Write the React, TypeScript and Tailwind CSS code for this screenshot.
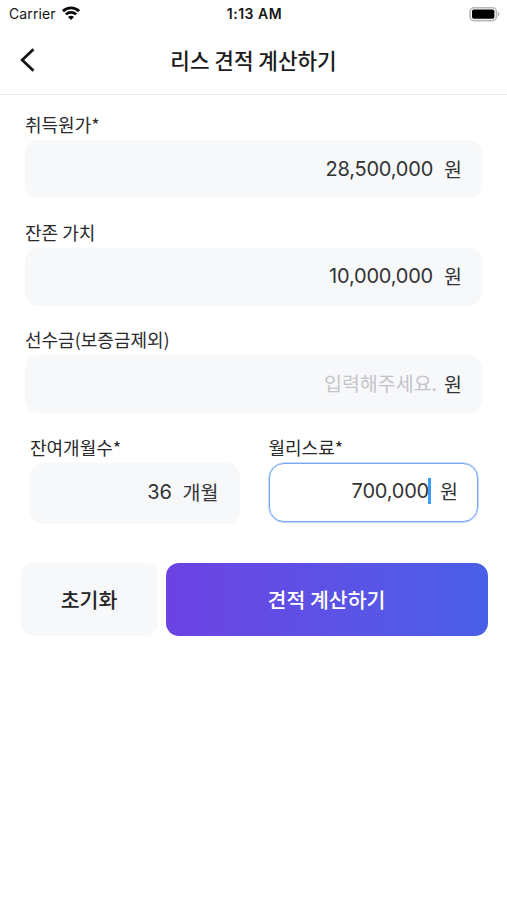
import type { ReactNode } from "react";

const KR = "font-['Noto_Sans_CJK_KR',sans-serif]";
const LATIN = "font-['Inter','Noto_Sans_CJK_KR',sans-serif]";

function StatusBar() {
  return (
    <div className={`${LATIN} grid h-7 grid-cols-3 items-center pl-[9px] pr-[7px] text-[#161616]`}>
      <div className="flex items-center gap-[6px]">
        <span className="text-[14px] leading-none tracking-[0.1px]">Carrier</span>
        <svg width="18" height="14" viewBox="0 0 18 14" fill="none" stroke="#0b0b0b" className="mb-[2px]">
          <path d="M.9 5.200C5.400.7 12.600.7 17.100 5.200" strokeWidth="2.9" />
          <path d="M3.800 8.400c2.900-2.800 7.500-2.800 10.400 0" strokeWidth="2.700" />
          <path d="M6 11c1.600-1.600 4.400-1.600 6 0L9 13.900z" fill="#0b0b0b" stroke="none" />
        </svg>
      </div>
      <span className="whitespace-nowrap text-center text-[14px] font-semibold leading-none tracking-[0.5px]">1:13 AM</span>
      <svg width="31" height="15" viewBox="0 0 31 15" className="justify-self-end">
        <rect x="1" y="0.8" width="26.400" height="12.800" rx="4" fill="#fff" stroke="#b8b8b8" strokeWidth="1.600" />
        <rect x="3" y="2.600" width="22.400" height="9.200" rx="1.800" fill="#000" />
        <path d="M28.800 5v4.400c1-.4 1.700-1.200 1.700-2.200S29.800 5.400 28.800 5z" fill="#b4b4b4" />
      </svg>
    </div>
  );
}

function Label({ children }: { children: ReactNode }) {
  return <div className={`${KR} h-[30px] whitespace-nowrap text-[18px] leading-[29px] text-[#2a2a2c]`}>{children}</div>;
}

function Unit({ children }: { children: ReactNode }) {
  return <span className={`${KR} text-[19.5px] leading-none text-[#333335]`}>{children}</span>;
}

function Amount({ children }: { children: ReactNode }) {
  return <span className={`${LATIN} text-[20px] leading-none tracking-[-0.2px] text-[#333335]`}>{children}</span>;
}

function WideField({ label, children }: { label: string; children: ReactNode }) {
  return (
    <div className="h-[107.7px]">
      <Label>{label}</Label>
      <div className="flex h-[58px] items-center justify-end gap-[11px] rounded-[13px] bg-[#f7f8fa] pb-px pr-[20px]">
        {children}
      </div>
    </div>
  );
}

export default function App() {
  return (
    <div className="h-[900px] w-[507px] overflow-hidden bg-white">
      <StatusBar />
      <header className="grid h-[67px] grid-cols-[60px_1fr_60px] items-center border-b border-[#e9e9eb]">
        <svg width="16" height="26" viewBox="0 0 16 26" fill="none" stroke="#161616" strokeWidth="2.800" className="mb-[3px] ml-[19px]">
          <path d="M14.500 2.200 3.200 13l11.300 10.800" />
        </svg>
        <h1 className={`${KR} pb-[2px] text-center text-[21.300px] font-medium leading-none text-[#1c1c1e]`}>리스 견적 계산하기</h1>
      </header>
      <main className="pt-[15px]">
        <div className="px-[25px]">
          <WideField label="취득원가*">
            <Amount>28,500,000</Amount>
            <Unit>원</Unit>
          </WideField>
          <WideField label="잔존 가치">
            <Amount>10,000,000</Amount>
            <Unit>원</Unit>
          </WideField>
          <WideField label="선수금(보증금제외)">
            <span className={`${KR} -mr-1 pb-[2px] text-[19.5px] leading-none text-[#c4c4ca]`}>입력해주세요.</span>
            <Unit>원</Unit>
          </WideField>
        </div>
        <div className="grid grid-cols-2 gap-[29px] pl-[30px] pr-[29px]">
          <div>
            <Label>잔여개월수*</Label>
            <div className="flex h-[61px] items-center justify-end gap-[11px] rounded-[13px] bg-[#f7f8fa] pb-[3px] pr-[21px]">
              <Amount>36</Amount>
              <Unit>개월</Unit>
            </div>
          </div>
          <div>
            <Label>월리스료*</Label>
            <div className="flex h-[58.5px] items-center justify-end rounded-[15px] border border-[#76a5f5] pb-[3px] pr-[19px] shadow-[0_0_0_0.5px_#8fb5f7]">
              <Amount>700,000</Amount>
              <span className="-ml-px mr-[9px] h-[26px] w-[3px] bg-[#3a9ff2]" />
              <Unit>원</Unit>
            </div>
          </div>
        </div>
        <div className={`${KR} mt-[39px] flex gap-[8px] pl-[20.500px] pr-[19.500px] text-[20.500px]`}>
          <button className="h-[73px] w-[137px] rounded-[13px] bg-[#f7f8fa] font-medium text-[#242426]">초기화</button>
          <button className="h-[73px] flex-1 rounded-[13px] bg-linear-to-r from-[#6c42e3] to-[#485fe7] font-medium text-white">견적 계산하기</button>
        </div>
      </main>
    </div>
  );
}
